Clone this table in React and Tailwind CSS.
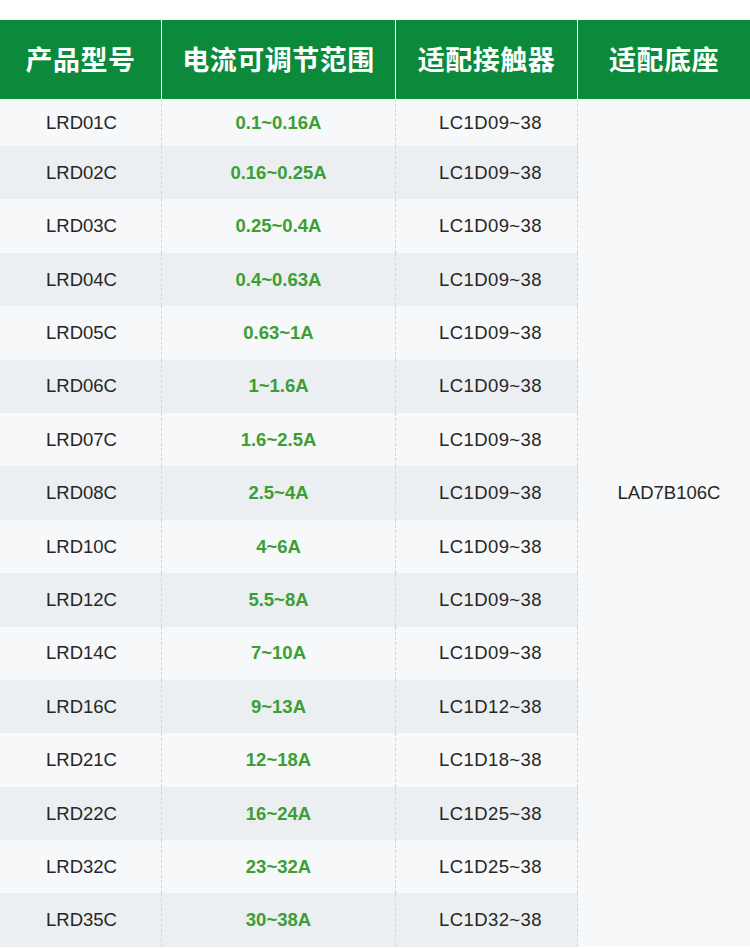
import React from "react";

const rows = [
  ["LRD01C", "0.1~0.16A", "LC1D09~38"],
  ["LRD02C", "0.16~0.25A", "LC1D09~38"],
  ["LRD03C", "0.25~0.4A", "LC1D09~38"],
  ["LRD04C", "0.4~0.63A", "LC1D09~38"],
  ["LRD05C", "0.63~1A", "LC1D09~38"],
  ["LRD06C", "1~1.6A", "LC1D09~38"],
  ["LRD07C", "1.6~2.5A", "LC1D09~38"],
  ["LRD08C", "2.5~4A", "LC1D09~38"],
  ["LRD10C", "4~6A", "LC1D09~38"],
  ["LRD12C", "5.5~8A", "LC1D09~38"],
  ["LRD14C", "7~10A", "LC1D09~38"],
  ["LRD16C", "9~13A", "LC1D12~38"],
  ["LRD21C", "12~18A", "LC1D18~38"],
  ["LRD22C", "16~24A", "LC1D25~38"],
  ["LRD32C", "23~32A", "LC1D25~38"],
  ["LRD35C", "30~38A", "LC1D32~38"],
];

export default function App() {
  return (
    <div
      className="w-[750px] h-[949px] overflow-hidden bg-white"
      style={{ fontFamily: '"Liberation Sans", Arial, sans-serif' }}
    >
      <div className="h-[20px] bg-white" />
      <div
        className="flex h-[79px] bg-[#0c8a3b] text-white font-bold text-[27px] tracking-[0.5px]"
        style={{ fontFamily: '"Noto Sans CJK SC", "Liberation Sans", sans-serif' }}
      >
        <div className="w-[162px] flex items-center justify-center border-r border-white">产品型号</div>
        <div className="w-[234px] flex items-center justify-center border-r border-white">电流可调节范围</div>
        <div className="w-[182px] flex items-center justify-center border-r border-white">适配接触器</div>
        <div className="flex-1 flex items-center justify-center">适配底座</div>
      </div>
      {rows.map((r, i) => {
        const bg = i % 2 === 0 ? "bg-[#f6f8f9]" : "bg-[#ebeff1]";
        const h = i === 0 ? "h-[47px]" : "h-[53.4px]";
        return (
          <div key={i} className={`flex ${h}`}>
            <div className={`w-[162px] ${bg} flex items-center justify-center pl-[2px] border-r border-dashed border-[#d3d7da] text-[18.5px] text-[#262626]`}>
              {r[0]}
            </div>
            <div className={`w-[234px] ${bg} flex items-center justify-center border-r border-dashed border-[#d3d7da] text-[18.5px] font-bold text-[#3c9e33]`}>
              {r[1]}
            </div>
            <div className={`w-[182px] ${bg} flex items-center justify-center pl-[8px] border-r border-dashed border-[#d3d7da] text-[18.5px] tracking-[0.4px] text-[#262626]`}>
              {r[2]}
            </div>
            <div className="flex-1 bg-[#f6f8f9] flex items-center justify-center pl-[10px] text-[18.5px] text-[#262626]">
              {i === 7 ? "LAD7B106C" : ""}
            </div>
          </div>
        );
      })}
    </div>
  );
}
